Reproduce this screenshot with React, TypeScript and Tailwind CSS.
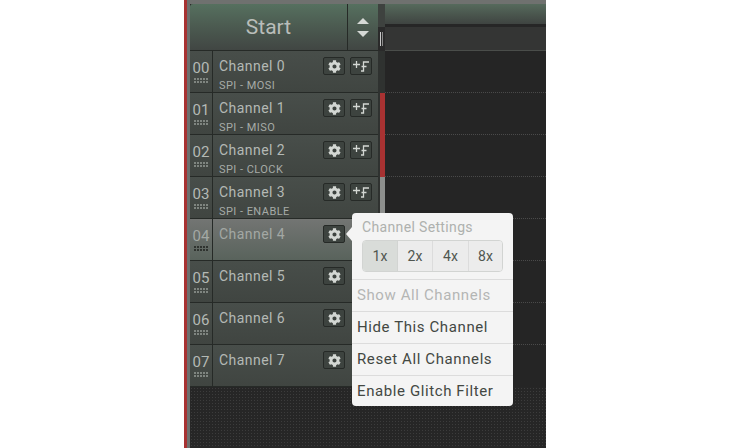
import { FaCog } from "react-icons/fa";

const channels = [
  { id: "00", name: "Channel 0", sub: "SPI - MOSI" },
  { id: "01", name: "Channel 1", sub: "SPI - MISO" },
  { id: "02", name: "Channel 2", sub: "SPI - CLOCK" },
  { id: "03", name: "Channel 3", sub: "SPI - ENABLE" },
  { id: "04", name: "Channel 4", sub: "" },
  { id: "05", name: "Channel 5", sub: "" },
  { id: "06", name: "Channel 6", sub: "" },
  { id: "07", name: "Channel 7", sub: "" },
];

function Grip({ active }: { active: boolean }) {
  return (
    <div className="mt-[2px] grid w-[15px] grid-cols-5 gap-x-px gap-y-px">
      {Array.from({ length: 10 }).map((_, index) => (
        <span key={index} className={active ? "h-[2px] w-[2px] bg-[#2f332f]" : "h-[2px] w-[2px] bg-[#7f8580]"} />
      ))}
    </div>
  );
}

function IconButton({ children }: { children: React.ReactNode }) {
  return (
    <div className="flex h-[18px] w-[22px] items-center justify-center rounded-[2px] border border-[#262a27] bg-[#3d433f] text-[#d3d7d3]">
      {children}
    </div>
  );
}

function ChannelRow({ channel, index }: { channel: (typeof channels)[number]; index: number }) {
  const active = index === 4;
  return (
    <div
      className={
        active
          ? "flex h-[42px] border-b border-[#262a27] bg-gradient-to-b from-[#737573] to-[#59635c]"
          : "flex h-[42px] border-b border-[#262a27] bg-gradient-to-b from-[#484e4a] to-[#404541]"
      }
    >
      <div className="flex w-[23px] shrink-0 flex-col items-center border-r border-[#262a27] pt-[9px]">
        <span className={active ? "text-[15px] leading-[16px] text-[#a3a8a4]" : "text-[15px] leading-[16px] text-[#b4b9b5]"}>{channel.id}</span>
        <Grip active={active} />
      </div>
      <div className="flex min-w-0 flex-1 flex-col pl-[6px] pt-[6px]">
        <div className="flex h-[18px] items-start">
          <span className={active ? "flex-1 text-[14px] leading-[18px] tracking-[0.45px] text-[#a3a8a4]" : "flex-1 text-[14px] leading-[18px] tracking-[0.45px] text-[#b4b9b5]"}>
            {channel.name}
          </span>
          <div className="flex gap-[5px] pr-[6px]">
            <IconButton>
              <FaCog size={13} />
            </IconButton>
            {index < 4 ? (
              <IconButton>
                <svg width="18" height="12" viewBox="0 0 18 12" fill="none" stroke="currentColor" strokeWidth="1.3">
                  <path d="M1 4.5h7M4.5 1v7M9 11h2.5V2H17M9.5 6.5h5" />
                </svg>
              </IconButton>
            ) : (
              <div className="w-[22px]" />
            )}
          </div>
        </div>
        {channel.sub && <span className="mt-[4px] text-[11px] leading-[13px] tracking-[0.45px] text-[#a6aba7]">{channel.sub}</span>}
      </div>
    </div>
  );
}

function TimelineRow({ last }: { last?: boolean }) {
  return <div className={last ? "h-[42px] bg-[#252525]" : "h-[42px] border-b border-dotted border-[#4a4a4a] bg-[#252525]"} />;
}

export default function App() {
  return (
    <div className="flex h-[448px] w-[730px] overflow-hidden bg-white font-['Roboto',sans-serif]">
      <div className="ml-[184px] w-[3px] bg-[#a83232]" />
      <div className="w-[3px] bg-[#6d706e]" />
      <div className="flex w-[356px] flex-col bg-[#262626] bg-[radial-gradient(#3c3c3c_0.6px,transparent_0.6px)] bg-[length:3px_3px]">
        <div className="h-[4px] bg-[#6f716f]" />
        <div className="flex">
          {/* channel list */}
          <div className="relative w-[188px] shrink-0">
            <div className="flex h-[47px] rounded-tl-[3px] border-b border-[#262a27] bg-gradient-to-b from-[#56705f] via-[#4b5a50] to-[#414643]">
              <div className="flex flex-1 items-center justify-center border-r border-[#262a27] pt-[1px] text-[21px] text-[#b9bdb9]">
                Start
              </div>
              <div className="flex w-[30px] flex-col items-center justify-center gap-[7px]">
                <span className="h-0 w-0 border-x-[6px] border-b-[6px] border-x-transparent border-b-[#d5d8d5]" />
                <span className="h-0 w-0 border-x-[6px] border-t-[6px] border-x-transparent border-t-[#d5d8d5]" />
              </div>
            </div>
            {channels.map((channel, index) => (
              <ChannelRow key={channel.id} channel={channel} index={index} />
            ))}

            {/* settings popover */}
            <div className="absolute left-[162px] top-[209px] z-10 w-[161px] rounded-[4px] bg-[#f4f4f4] pt-[4px]">
              <span className="absolute left-[-6px] top-[14px] h-0 w-0 border-y-[7px] border-r-[6px] border-y-transparent border-r-[#f4f4f4]" />
              <div className="pl-[10px] text-[14px] leading-[20px] tracking-[0.35px] text-[#aeb1ae]">Channel Settings</div>
              <div className="ml-[10px] mt-[3px] flex h-[32px] w-[141px] overflow-hidden rounded-[4px] border border-[#d2d4d2] text-[14px] text-[#505650]">
                <div className="flex w-[35px] items-center justify-center border-r border-[#d2d4d2] bg-[#d9dcd9]">1x</div>
                <div className="flex w-[35px] items-center justify-center border-r border-[#dcdcdc] bg-[#ececec]">2x</div>
                <div className="flex w-[36px] items-center justify-center border-r border-[#dcdcdc] bg-[#ececec]">4x</div>
                <div className="flex flex-1 items-center justify-center bg-[#ececec]">8x</div>
              </div>
              <div className="mt-[7px] flex h-[32px] items-center border-t border-[#dcdcdc] pl-[5px] text-[15px] tracking-[0.6px] text-[#b4b6b4]">Show All Channels</div>
              <div className="flex h-[32px] items-center border-t border-[#dcdcdc] pl-[5px] text-[15px] tracking-[0.6px] text-[#434843]">Hide This Channel</div>
              <div className="flex h-[32px] items-center border-t border-[#dcdcdc] pl-[5px] text-[15px] tracking-[0.6px] text-[#434843]">Reset All Channels</div>
              <div className="flex h-[31px] items-center border-t border-[#dcdcdc] pl-[5px] text-[15px] tracking-[0.6px] text-[#434843]">Enable Glitch Filter</div>
            </div>
          </div>

          {/* scroll markers */}
          <div className="flex w-[7px] shrink-0 flex-col bg-[#2f3230]">
            <div className="h-[23px] bg-[#3e423f]" />
            <div className="flex h-[24px] items-center gap-px bg-[#2a2a2a] pl-[2px]">
              <span className="h-[14px] w-px bg-[#c9c9c9]" />
              <span className="h-[14px] w-px bg-[#8a8a8a]" />
            </div>
            <div className="h-[42px]" />
            <div className="ml-[2px] h-[84px] w-[5px] bg-[#a83232]" />
            <div className="ml-[2px] h-[37px] w-[5px] bg-[#8d8f8d]" />
          </div>

          {/* timeline */}
          <div className="flex-1">
            <div className="h-[20px] bg-gradient-to-b from-[#566a5c] to-[#3f4441]" />
            <div className="h-[3px] bg-[#262626]" />
            <div className="h-[24px] border-b border-[#4a4d4a] bg-[#343534]" />
            {channels.map((channel, index) => (
              <TimelineRow key={channel.id} last={index === 7} />
            ))}
          </div>
        </div>
      </div>
    </div>
  );
}
